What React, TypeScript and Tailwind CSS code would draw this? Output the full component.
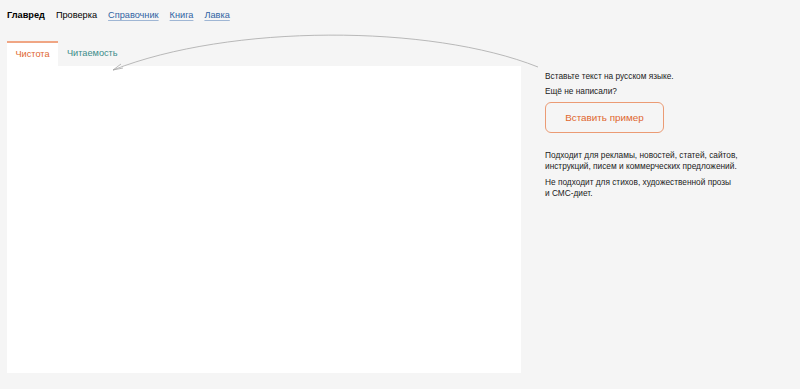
const navLinks = [
  { label: 'Главред', kind: 'current' },
  { label: 'Проверка', kind: 'plain' },
  { label: 'Справочник', kind: 'link' },
  { label: 'Книга', kind: 'link' },
  { label: 'Лавка', kind: 'link' },
];

function HintArrow() {
  return (
    <svg className="pointer-events-none absolute left-0 top-0" width="800" height="100" viewBox="0 0 800 100">
      <path d="M538 67 C 430 24, 230 24, 113 70" fill="none" stroke="#a8a8a8" strokeWidth="0.8" />
      <path d="M121 64 L113 70 L123 68" fill="none" stroke="#a8a8a8" strokeWidth="0.8" />
    </svg>
  );
}

export default function App() {
  return (
    <div className="relative min-h-[389px] bg-[#f5f5f5] font-['Liberation_Sans',Arial,sans-serif] text-[#222]">
      <HintArrow />

      <nav className="flex items-center gap-[11px] px-[7px] pt-[9px] text-[9.2px] leading-[13px]">
        {navLinks.map((item) => (
          <span
            key={item.label}
            className={
              item.kind === 'current'
                ? 'font-bold text-black'
                : item.kind === 'plain'
                  ? 'text-black'
                  : 'text-[#2f63a3] underline decoration-[#9fb6d4] underline-offset-2'
            }
          >
            {item.label}
          </span>
        ))}
      </nav>

      <div className="mt-[19px] flex gap-6 px-[7px]">
        <div className="flex w-[514px] flex-col">
          <div className="flex text-[9.2px]">
            <div className="flex h-[25px] w-[51px] items-center justify-center border-t-2 border-[#f0a684] bg-white text-[#e0662e]">
              Чистота
            </div>
            <div className="flex h-[25px] items-center px-[9px] text-[#3b8c8a]">Читаемость</div>
          </div>
          <div className="h-[307px] bg-white" />
        </div>

        <aside className="flex flex-col pt-[30px] text-[8.3px] leading-[11px] text-[#222]">
          <p>Вставьте текст на русском языке.</p>
          <p className="mt-[4px]">Ещё не написали?</p>
          <button className="mt-[5px] h-[31px] w-[119px] rounded-[6px] border border-[#eb9b74] text-[9.9px] text-[#e0662e]">
            Вставить пример
          </button>
          <p className="mt-[17px]">
            Подходит для рекламы, новостей, статей, сайтов,
            <br />
            инструкций, писем и коммерческих предложений.
          </p>
          <p className="mt-[5px]">
            Не подходит для стихов, художественной прозы
            <br />и СМС-диет.
          </p>
        </aside>
      </div>
    </div>
  );
}
